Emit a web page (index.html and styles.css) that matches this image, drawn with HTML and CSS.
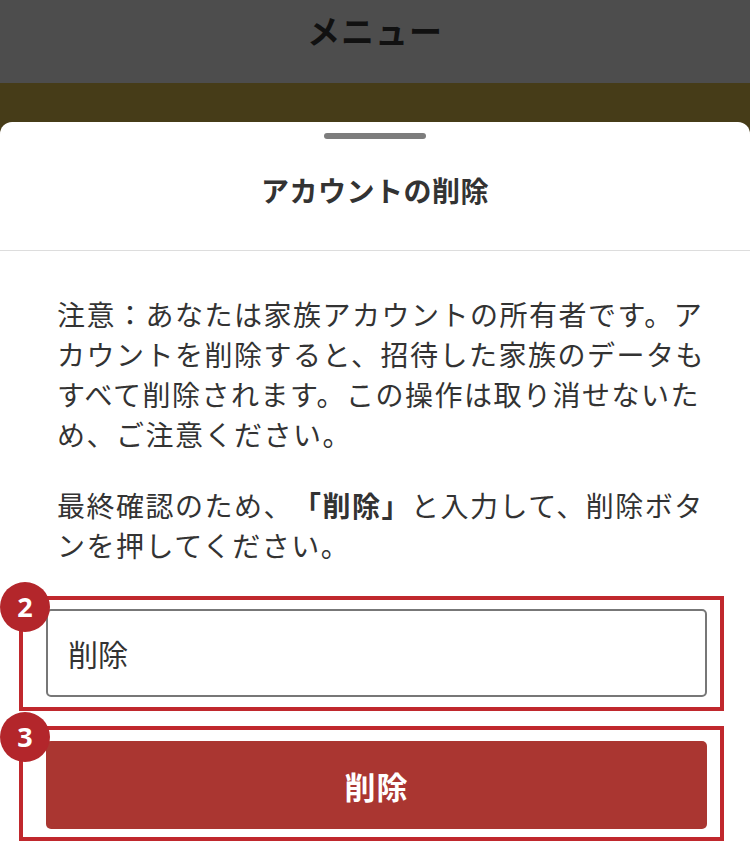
FILE: index.html
```html
<!DOCTYPE html>
<html lang="ja">
<head>
<meta charset="utf-8">
<title>アカウントの削除</title>
<link rel="stylesheet" href="styles.css">
</head>
<body>
<header class="topbar">
  <h1 class="topbar-title">メニュー</h1>
</header>
<div class="band"></div>
<section class="sheet">
  <div class="handle"></div>
  <h2 class="sheet-title">アカウントの削除</h2>
  <div class="sheet-body">
    <p class="notice">注意：あなたは家族アカウントの所有者です。アカウントを削除すると、招待した家族のデータもすべて削除されます。この操作は取り消せないため、ご注意ください。</p>
    <p class="notice">最終確認のため、<strong>「削除」</strong>と入力して、削除ボタンを押してください。</p>
    <div class="callout callout-input">
      <span class="badge">2</span>
      <input class="confirm-input" type="text" value="削除">
    </div>
    <div class="callout callout-button">
      <span class="badge">3</span>
      <button class="delete-btn" type="button">削除</button>
    </div>
  </div>
</section>
</body>
</html>
```
FILE: styles.css
```css
* { box-sizing: border-box; }
html, body {
  margin: 0;
  padding: 0;
  background: #ffffff;
  font-family: "Noto Sans CJK JP", "Noto Sans", sans-serif;
  text-spacing-trim: space-all;
}
body { width: 750px; height: 850px; overflow: hidden; }

.topbar {
  height: 83px;
  background: #4d4d4d;
  padding-top: 10px;
}
.topbar-title {
  margin: 0;
  text-align: center;
  font-size: 33px;
  line-height: 40px;
  font-weight: 700;
  color: #111111;
  letter-spacing: 1px;
}
.band {
  height: 51px;
  background: #463c18;
}

.sheet {
  background: #ffffff;
  border-radius: 12px 12px 0 0;
  padding-top: 11px;
  margin-top: -12px;
}
.handle {
  width: 102px;
  height: 6px;
  border-radius: 3px;
  background: #7d7d7d;
  margin: 0 auto;
}
.sheet-title {
  margin: 31px 0 0;
  padding-bottom: 40px;
  text-align: center;
  font-size: 28px;
  line-height: 40px;
  font-weight: 700;
  color: #333333;
  letter-spacing: 0.5px;
  border-bottom: 1px solid #dddddd;
}
.sheet-body {
  padding-top: 43px;
}
.notice {
  margin: 0 0 31px 57px;
  width: 660px;
  font-size: 28px;
  line-height: 40px;
  letter-spacing: 1.5px;
  color: #333333;
  text-spacing-trim: space-all;
}
.notice strong { font-weight: 700; }

.callout {
  position: relative;
  margin-left: 19px;
  width: 705px;
  border: 4px solid #c0282d;
}
.callout-input { padding: 9px 13px 10px 23px; }
.callout-button { padding: 11px 13px 8px 23px; margin-top: 15px; }

.badge {
  position: absolute;
  left: -23px;
  top: -18px;
  width: 50px;
  height: 50px;
  border-radius: 50%;
  background: #b3262b;
  color: #ffffff;
  font-family: "Open Sans", "Noto Sans", sans-serif;
  font-weight: 700;
  font-size: 27px;
  line-height: 50px;
  text-align: center;
}

.confirm-input {
  display: block;
  width: 100%;
  height: 88px;
  border: 2px solid #777777;
  border-radius: 5px;
  padding: 0 20px;
  font-family: "Noto Sans CJK JP", "Noto Sans", sans-serif;
  font-size: 30px;
  color: #333333;
  background: #ffffff;
  outline: none;
}
.delete-btn {
  display: block;
  width: 100%;
  height: 88px;
  border: none;
  border-radius: 5px;
  background: #aa3631;
  color: #ffffff;
  font-family: "Noto Sans CJK JP", "Noto Sans", sans-serif;
  font-size: 31px;
  font-weight: 700;
  letter-spacing: 1px;
}
```
